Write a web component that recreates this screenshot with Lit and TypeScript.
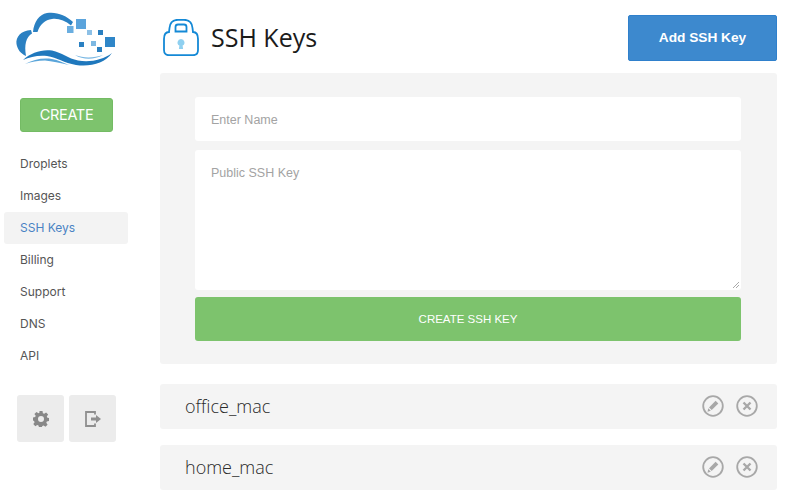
import { LitElement, html, css, svg } from "lit";
import { customElement } from "lit/decorators.js";

const logo = svg`<svg class="logo" width="120" height="60" viewBox="0 12 120 60" fill="none">
  <path d="M31 30 C21 30.500 15.500 37 16.500 44 C17.500 49.500 20.500 53.500 26 56 C25 50 25 46 26 42 C27 38 29 35.500 32 33.500 Z" fill="#2a80c2"/>
  <path d="M33 32 C34 22 39 14.500 47 13 C56 11.500 66 15 73 22 L71 25.500 C65 20.500 58 18 52 19 C45 20 40 24 37.500 32 Z" fill="#2a80c2"/>
  <path d="M23 60 C31 52.500 42 49 52 50.500 C62 52.500 68 58.500 78 60.500 C90 62.500 103 60 112 53 C105 63.500 90 67 76 65 C64 63 57 57.500 47 56 C38 55 30 57 23 60 Z" fill="#1f78bd"/>
  <path d="M25 64 C33 59.500 43 57.500 52 59 C58 60 63 62.500 69 65 C60 63 52 61 45 60.500 C38 60.500 31 62 25 64 Z" fill="#5aa5da"/>
  <path d="M75 55 C84 58.500 94 58 103 55 C94 60 83 60 75 55 Z" fill="#7ab8e4"/>
  <rect x="67" y="26" width="6.500" height="7" fill="#6aaee0"/><rect x="76" y="19" width="10" height="10" fill="#5ba4dc"/>
  <rect x="87" y="30" width="5" height="5" fill="#8dc0e6"/><rect x="98" y="30" width="5" height="5" fill="#2a7fc0"/>
  <rect x="79" y="42" width="5" height="5" fill="#2a80c2"/><rect x="91" y="41" width="5" height="5" fill="#7db8e2"/>
  <rect x="105" y="37" width="10" height="10" fill="#2f86c8"/><rect x="97" y="47" width="5" height="5" fill="#2a7fc0"/>
</svg>`;

const lock = svg`<svg width="36" height="37" viewBox="0 0 36 37" fill="none">
  <path d="M1 20 C1 15 3 13 6 13 L6.500 9 C7 3 10 .8 15 .8 H21 C26 .8 29 3 29.500 9 L30 13 C33 13 35 15 35 20 V31 C35 34.500 33 36.200 30 36.200 H6 C3 36.200 1 34.500 1 31 Z" stroke="#1489d6" stroke-width="1.800" fill="#fff"/>
  <path d="M12.500 12.500 V8 C12.500 6.500 13.500 5.500 15 5.500 H21 C22.500 5.500 23.500 6.500 23.500 8 V12.500 Z" stroke="#1489d6" stroke-width="1.800"/>
  <path d="M18 20 a3.500 3.500 0 0 1 1.600 6.600 l0.500 3.400 h-4.200 l0.500 -3.400 a3.500 3.500 0 0 1 1.600 -6.600z" fill="#8fd0f0"/>
</svg>`;

const gear = svg`<svg width="16" height="16" viewBox="0 0 16 16"><path fill="#888" fill-rule="evenodd" d="M6.500 0h3l.4 2.200 1.300.6L13.100 1.500l2 2.100-1.300 1.800.6 1.300 1.600.4v3l-2.200.4-.5 1.300 1.300 1.900-2.100 2-1.900-1.300-1.300.5-.4 1.100h-3l-.4-1.500-1.300-.6-1.900 1.300-2-2.100 1.300-1.800-.6-1.300L0 9.500v-3l2.200-.4.500-1.300L1.400 3l2.100-2 1.900 1.300 1-.5zM8 5a3 3 0 1 0 0 6 3 3 0 0 0 0-6z"/></svg>`;

const exit = svg`<svg width="16" height="16" viewBox="0 0 16 16" fill="none"><path d="M10 3.500V1H1v14h9v-2.500" stroke="#8f8f8f" stroke-width="1.800"/><path d="M6 6.500h5V4l5 4-5 4V9.500H6z" fill="#8f8f8f"/></svg>`;

const pencil = svg`<svg width="22" height="22" viewBox="0 0 22 22" fill="none"><circle cx="11" cy="11" r="9.800" stroke="#a8a8a8" stroke-width="1.800"/><path d="M13.600 5.800l2.700 2.700-6.600 6.600-2.700-2.700z" fill="#a8a8a8"/><path d="M6.300 13.300l2.500 2.500-3.300.9z" fill="#a8a8a8"/></svg>`;

const cross = svg`<svg width="22" height="22" viewBox="0 0 22 22" fill="none"><circle cx="11" cy="11" r="9.800" stroke="#a8a8a8" stroke-width="1.800"/><path d="M7.500 7.500l7 7M14.500 7.500l-7 7" stroke="#a8a8a8" stroke-width="2.400"/></svg>`;

@customElement("app-root")
export class AppRoot extends LitElement {
  static styles = css`
    :host { display: block; width: 800px; height: 504px; background: #fff; overflow: hidden; font-family: "Open Sans", sans-serif; }
    .page { display: flex; height: 504px; }
    .side { width: 160px; flex: none; box-sizing: border-box; padding: 12px 0 0 4px; display: flex; flex-direction: column; }
    .logo { display: block; margin-left: -4px; flex: none; }
    .create { margin: 26px 0 0 16px; width: 93px; height: 34px; box-sizing: border-box; background: #7dc36d; border: 1px solid #74bb64; border-radius: 3px; color: #fff; font: 400 14.500px/31px "Inter", sans-serif; letter-spacing: -0.300px; text-align: center; }
    nav { margin-top: 16px; display: flex; flex-direction: column; width: 124px; }
    nav a { height: 32px; padding-left: 16px; font: 400 12px/31px "Inter", sans-serif; color: #555; border-radius: 3px; }
    nav a.on { background: #f3f3f3; color: #4a83c4; }
    .tools { margin: 23px 0 0 13px; display: flex; gap: 5px; }
    .tool { width: 47px; height: 47px; background: #ececec; border-radius: 3px; display: flex; align-items: center; justify-content: center; }
    main { width: 617px; flex: none; }
    header { height: 73px; display: flex; justify-content: space-between; align-items: flex-start; }
    .title { display: flex; align-items: center; gap: 12px; margin: 18px 0 0 3px; height: 38px; }
    h1 { margin: 0; font: 400 25px/36px "Open Sans", sans-serif; color: #1b1b1b; }
    .add { margin-top: 15px; width: 149px; height: 46px; box-sizing: border-box; background: #3d89ce; border: 1px solid #2f80cc; border-radius: 2px; color: #fff; font: 700 13.700px/44px "Liberation Sans", sans-serif; text-align: center; }
    .panel { background: #f4f4f4; border-radius: 3px; padding: 24px 36px 23px 35px; height: 291px; box-sizing: border-box; display: flex; flex-direction: column; }
    .field { background: #fff; border-radius: 3px; box-sizing: border-box; padding-left: 16px; color: #a3a3a3; font: 400 12.500px "Liberation Sans", sans-serif; }
    .name { height: 44px; line-height: 46px; }
    .key { position: relative; height: 140px; margin-top: 9px; padding-top: 16px; line-height: 15px; }
    .grip { position: absolute; right: 1px; bottom: 1px; }
    .submit { margin-top: 7px; height: 44px; background: #7dc36d; border-radius: 3px; color: #fff; font: 400 11.500px/44px "Liberation Sans", sans-serif; text-align: center; }
    .row { background: #f4f4f4; border-radius: 3px; height: 45px; margin-top: 20px; display: flex; align-items: center; padding: 0 19px 2px 25px; box-sizing: border-box; }
    .row + .row { margin-top: 16px; }
    .row span { flex: 1; font: 300 18px "Open Sans", sans-serif; color: #2a2a2a; }
    .row svg { margin-left: 12px; display: block; }
  `;

  render() {
    const items = ["Droplets", "Images", "SSH Keys", "Billing", "Support", "DNS", "API"];
    return html`<div class="page">
      <aside class="side">
        ${logo}
        <div class="create">CREATE</div>
        <nav>${items.map((i) => html`<a class=${i === "SSH Keys" ? "on" : ""}>${i}</a>`)}</nav>
        <div class="tools"><div class="tool">${gear}</div><div class="tool">${exit}</div></div>
      </aside>
      <main>
        <header>
          <div class="title">${lock}<h1>SSH Keys</h1></div>
          <div class="add">Add SSH Key</div>
        </header>
        <section class="panel">
          <div class="field name">Enter Name</div>
          <div class="field key">Public SSH Key
            <svg class="grip" width="8" height="8" viewBox="0 0 8 8"><path d="M1 7l6-6M4 7l3-3" stroke="#aaa"/></svg>
          </div>
          <div class="submit">CREATE SSH KEY</div>
        </section>
        <div class="row"><span>office_mac</span>${pencil}${cross}</div>
        <div class="row"><span>home_mac</span>${pencil}${cross}</div>
      </main>
    </div>`;
  }
}
